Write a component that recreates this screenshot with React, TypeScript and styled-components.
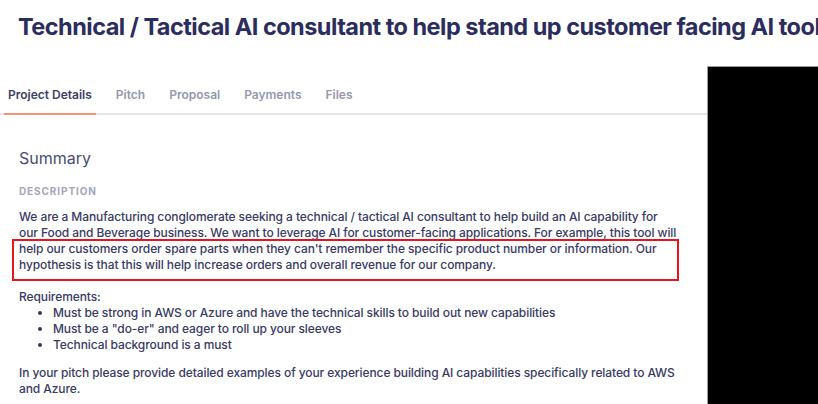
import React from "react";
import styled, { createGlobalStyle } from "styled-components";

const Global = createGlobalStyle`
  html, body { margin: 0; padding: 0; background: #ffffff; }
  body { font-family: Inter, "Noto Sans", sans-serif; -webkit-font-smoothing: antialiased; }
`;

const Page = styled.div`
  position: relative;
  width: 818px;
  height: 404px;
  overflow: hidden;
  background: #ffffff;
`;

const Title = styled.h1`
  margin: 12px 0 0 18px;
  font-size: 23.5px;
  line-height: 30px;
  font-weight: 700;
  color: #2b2d5c;
  white-space: nowrap;
  letter-spacing: -0.52px;
`;

const Tabs = styled.nav`
  display: flex;
  gap: 16px;
  margin-top: 37px;
  padding-left: 4px;
  border-bottom: 2px solid #e4e4ec;
`;

const Tab = styled.div<{ $active?: boolean }>`
  padding: 8px 4px 10px;
  margin-bottom: -2px;
  font-size: 12px;
  line-height: 16px;
  font-weight: 600;
  color: ${(p) => (p.$active ? "#3c3e66" : "#9597ae")};
  border-bottom: 2px solid ${(p) => (p.$active ? "#f39573" : "transparent")};
`;

const Content = styled.section`
  padding-left: 19px;
  width: 660px;
  color: #383a62;
`;

const Heading = styled.h2`
  margin: 33px 0 0;
  font-size: 16px;
  line-height: 20px;
  font-weight: 400;
  color: #4a4c70;
`;

const Label = styled.div`
  margin-top: 16px;
  font-size: 10px;
  line-height: 14px;
  font-weight: 700;
  letter-spacing: 0.9px;
  color: #a3a5ba;
`;

const Para = styled.div<{ $gap?: number }>`
  position: relative;
  margin-top: ${(p) => p.$gap ?? 0}px;
  font-size: 12px;
  line-height: 16px;
  font-weight: 500;
  letter-spacing: -0.09px;
`;

const Line = styled.span`
  display: block;
  white-space: nowrap;
`;

const Highlight = styled.div`
  position: absolute;
  left: -7px;
  top: 30px;
  width: 667px;
  height: 42px;
  box-sizing: border-box;
  border: 2px solid #e8141c;
  pointer-events: none;
`;

const List = styled.ul`
  margin: 0;
  padding-left: 34px;
  font-size: 12px;
  line-height: 16px;
  font-weight: 500;
  letter-spacing: -0.09px;
`;

const Item = styled.li`
  white-space: nowrap;
`;

const Redaction = styled.div`
  position: absolute;
  left: 707px;
  top: 66px;
  right: 0;
  bottom: 0;
  background: #000000;
  border-left: 1px solid #9a9a9a;
  border-top: 1px solid #9a9a9a;
`;

export default function App() {
  return (
    <Page>
      <Global />
      <Title>Technical / Tactical AI consultant to help stand up customer facing AI tools</Title>
      <Tabs>
        <Tab $active>Project Details</Tab>
        <Tab>Pitch</Tab>
        <Tab>Proposal</Tab>
        <Tab>Payments</Tab>
        <Tab>Files</Tab>
      </Tabs>
      <Content>
        <Heading>Summary</Heading>
        <Label>DESCRIPTION</Label>
        <Para $gap={11}>
          <Line>We are a Manufacturing conglomerate seeking a technical / tactical AI consultant to help build an AI capability for</Line>
          <Line>our Food and Beverage business. We want to leverage AI for customer-facing applications. For example, this tool will</Line>
          <Line>help our customers order spare parts when they can't remember the specific product number or information. Our</Line>
          <Line>hypothesis is that this will help increase orders and overall revenue for our company.</Line>
          <Highlight />
        </Para>
        <Para $gap={16}>
          <Line>Requirements:</Line>
        </Para>
        <List>
          <Item>Must be strong in AWS or Azure and have the technical skills to build out new capabilities</Item>
          <Item>Must be a "do-er" and eager to roll up your sleeves</Item>
          <Item>Technical background is a must</Item>
        </List>
        <Para $gap={12}>
          <Line>In your pitch please provide detailed examples of your experience building AI capabilities specifically related to AWS</Line>
          <Line>and Azure.</Line>
        </Para>
      </Content>
      <Redaction />
    </Page>
  );
}
